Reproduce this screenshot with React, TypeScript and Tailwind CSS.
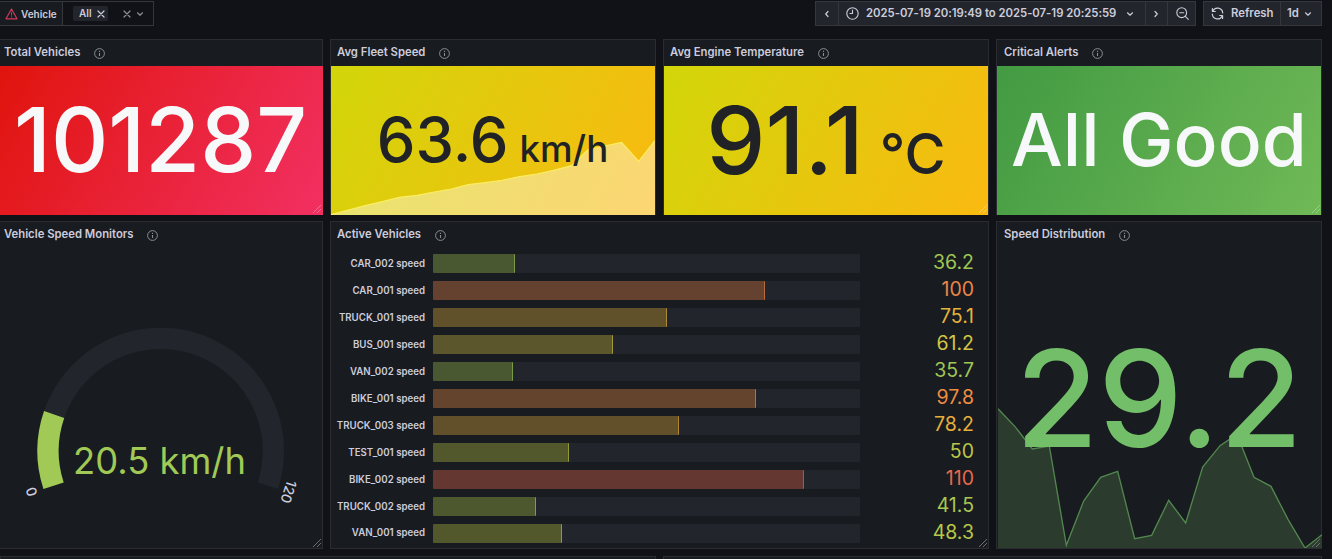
import React from "react";

const ICON = "fill-none stroke-current";

function InfoIcon() {
  return (
    <svg className="mt-[2px] h-[11px] w-[11px] text-[#8b8d94]" viewBox="0 0 11 11">
      <circle cx="5.5" cy="5.5" r="4.9" className={ICON} strokeWidth="1" />
      <path d="M5.5 5v3" className={ICON} strokeWidth="1.1" />
      <path d="M5.5 2.8v1.2" className={ICON} strokeWidth="1.1" />
    </svg>
  );
}

function Chevron({ d, className }: { d: string; className?: string }) {
  return (
    <svg className={"h-[8px] w-[8px] shrink-0 " + (className ?? "")} viewBox="0 0 8 8">
      <path d={d} className={ICON} strokeWidth="1.2" strokeLinecap="round" strokeLinejoin="round" />
    </svg>
  );
}
const DOWN = "M1.5 2.8 4 5.2 6.5 2.8";
const LEFT = "M5 1.5 2.7 4 5 6.5";
const RIGHT = "M3 1.5 5.3 4 3 6.5";
const CROSS = "M1 1 7 7M7 1 1 7";

function ResizeHandle({ className }: { className: string }) {
  return (
    <svg className={"absolute right-0 bottom-0 h-[10px] w-[10px] " + className} viewBox="0 0 10 10">
      <path d="M1 9 9 1M5 9 9 5" className={ICON} strokeWidth="1" />
    </svg>
  );
}

function Panel({
  title,
  pad,
  frame,
  children,
  handle,
}: {
  title: string;
  pad: string;
  frame: string;
  children: React.ReactNode;
  handle?: string;
}) {
  return (
    <section className={"relative flex min-w-0 flex-col border-[#2a2c31] bg-[#181b1f] " + frame}>
      <header className={"flex h-[26px] shrink-0 items-center gap-[14px] pb-[2px] " + pad}>
        <h2 className="text-[11.3px] leading-[24px] font-[600] whitespace-nowrap">{title}</h2>
        <InfoIcon />
      </header>
      <div className="relative flex min-h-0 flex-1 flex-col">{children}</div>
      {handle && <ResizeHandle className={handle} />}
    </section>
  );
}

const SPEED_LINE =
  "M18 464 70 450 121 437 172 425 223 412 276 406 328 396 379 387 430 374 481 368 532 361 584 350 636 342 686 331 740 317 788 270 839 258 890 247 941 304 990 242";
const DIST_LINE =
  "M39 268 90 322 142 389 193 380 244 678 296 545 347 474 398 456 449 658 500 648 551 543 602 611 653 443 705 379 756 345 807 474 858 501 909 600 960 686 1011 646";

const vehicles = [
  { name: "CAR_002", value: 36.2, text: "text-[#9fc653]", bar: "bg-[#495831] border-r-[#7b9a45]" },
  { name: "CAR_001", value: 100, text: "text-[#ec8646]", bar: "bg-[#64422f] border-r-[#b86b3d]" },
  { name: "TRUCK_001", value: 75.1, text: "text-[#e2b33c]", bar: "bg-[#60512b] border-r-[#ad8b35]" },
  { name: "BUS_001", value: 61.2, text: "text-[#d2c545]", bar: "bg-[#5b562c] border-r-[#a39838]" },
  { name: "VAN_002", value: 35.7, text: "text-[#9fc653]", bar: "bg-[#495831] border-r-[#7b9a45]" },
  { name: "BIKE_001", value: 97.8, text: "text-[#ee8c43]", bar: "bg-[#64442d] border-r-[#b9703b]" },
  { name: "TRUCK_003", value: 78.2, text: "text-[#e6ae3b]", bar: "bg-[#61502a] border-r-[#b08633]" },
  { name: "TEST_001", value: 50, text: "text-[#bbc646]", bar: "bg-[#53572c] border-r-[#909a3b]" },
  { name: "BIKE_002", value: 110, text: "text-[#e5694c]", bar: "bg-[#643730] border-r-[#b35443]" },
  { name: "TRUCK_002", value: 41.5, text: "text-[#aac74f]", bar: "bg-[#4d582e] border-r-[#849b40]" },
  { name: "VAN_001", value: 48.3, text: "text-[#b8c747]", bar: "bg-[#52572c] border-r-[#8e9a3b]" },
];
const BAR_MIN = 15.3;
const BAR_RANGE = 109;

function Toolbar() {
  const cell = "flex h-full items-center border-[#35373d]";
  return (
    <div className="flex h-[39px] shrink-0 items-start pt-px text-[11.35px] font-[600]">
      <div className="flex h-[25px] border border-l-0 border-[#35373d]">
        <div className={cell + " w-[63px] border-r bg-[#181b1f] pl-[5px]"}>
          <svg className="h-[12px] w-[13px] shrink-0 text-[#d1395c]" viewBox="0 0 13 12">
            <path d="M6.5 1 12 10.8H1Z" className={ICON} strokeWidth="1.2" strokeLinejoin="round" />
            <path d="M6.5 4.3v3.2M6.5 8.5v1" className={ICON} strokeWidth="1" />
          </svg>
          <span className="mt-px ml-[3px] text-[10px]">Vehicle</span>
        </div>
        <div className={cell + " w-[90px] bg-[#111217] pl-[10px]"}>
          <span className="flex h-[15px] w-[35px] items-center rounded-[2px] bg-[#22252b] pl-[6px] text-[10px]">
            All
            <Chevron d={CROSS} className="ml-[5px] h-[7px] w-[7px]" />
          </span>
          <Chevron d={CROSS} className="mt-px ml-[15px] h-[8px] text-[#8e9097]" />
          <Chevron d={DOWN} className="mt-px ml-[5px] text-[#8e9097]" />
        </div>
      </div>
      <div className="ml-auto flex h-[25px] border border-[#35373d] bg-[#22252b]">
        <div className={cell + " w-[23px] justify-center border-r"}>
          <Chevron d={LEFT} />
        </div>
        <div className={cell + " w-[307px] border-r pl-[7px]"}>
          <svg className="h-[13px] w-[13px] shrink-0" viewBox="0 0 13 13">
            <circle cx="6.5" cy="6.5" r="5.7" className={ICON} strokeWidth="1.1" />
            <path d="M6.5 3v3.5H4" className={ICON} strokeWidth="1.1" strokeLinecap="round" strokeLinejoin="round" />
          </svg>
          <span className="mt-px ml-[7px] w-[250px] shrink-0 tracking-[-0.03px] whitespace-nowrap">
            2025-07-19 20:19:49 to 2025-07-19 20:25:59
          </span>
          <Chevron d={DOWN} className="ml-[10px]" />
        </div>
        <div className={cell + " w-[22px] justify-center border-r pr-px"}>
          <Chevron d={RIGHT} />
        </div>
        <div className={cell + " w-[27px] justify-center pl-px"}>
          <svg className="h-[13px] w-[13px]" viewBox="0 0 13 13">
            <circle cx="5.7" cy="5.7" r="4.9" className={ICON} strokeWidth="1.1" />
            <path d="M9.3 9.3 12.3 12.3M3.7 5.7h4" className={ICON} strokeWidth="1.1" strokeLinecap="round" />
          </svg>
        </div>
      </div>
      <div className="mr-[10px] ml-[7px] flex h-[25px] border border-[#35373d] bg-[#22252b]">
        <div className={cell + " w-[77px] border-r pl-[7px]"}>
          <svg className="h-[13px] w-[13px] shrink-0" viewBox="0 0 13 13">
            <path
              d="M1.4 1.6v2.9h2.9M1.7 4.3A5.2 5.2 0 0 1 11.7 6M11.6 11.4V8.5H8.7M11.3 8.7A5.2 5.2 0 0 1 1.3 7"
              className={ICON}
              strokeWidth="1.2"
              strokeLinecap="round"
              strokeLinejoin="round"
            />
          </svg>
          <span className="mt-px ml-[7px]">Refresh</span>
        </div>
        <div className={cell + " w-[40px] pl-[6px]"}>
          <span className="mt-px">1d</span>
          <Chevron d={DOWN} className="ml-[5px]" />
        </div>
      </div>
    </div>
  );
}

function polar(r: number, deg: number) {
  const a = (deg * Math.PI) / 180;
  return `${(160.7 + r * Math.cos(a)).toFixed(2)} ${(203 + r * Math.sin(a)).toFixed(2)}`;
}
function ring(from: number, to: number) {
  const large = to - from > 180 ? 1 : 0;
  return `M${polar(123.3, from)}A123.3 123.3 0 ${large} 1 ${polar(123.3, to)}L${polar(102, to)}A102 102 0 ${large} 0 ${polar(102, from)}Z`;
}

export default function App() {
  return (
    <main className="flex h-[559px] w-[1332px] flex-col overflow-hidden bg-[#111217] font-['Inter',sans-serif] text-[#ccccdc]">
      <Toolbar />
      <div className="grid h-[176px] shrink-0 grid-cols-[323px_326px_326px_326px] gap-x-[7px]">
        <Panel title="Total Vehicles" pad="pl-[4px]" frame="border border-l-0" handle="text-white/30">
          <div className="-mr-px -mb-px flex flex-1 items-center justify-center bg-[linear-gradient(120deg,#e0140d,#f23062)] pr-[2px] pb-[2px] text-[89px] leading-none font-medium text-[#f7f8fa]">
            <span>101287</span>
          </div>
        </Panel>
        <Panel title="Avg Fleet Speed" pad="pl-[6px]" frame="border">
          <div className="relative -mb-px flex flex-1 items-center justify-center bg-[linear-gradient(120deg,#d2d60a,#fab911)] pr-px pb-px text-[#202226]">
            <svg className="absolute inset-0 h-full w-full" viewBox="18 18 972 447" preserveAspectRatio="none">
              <path d={SPEED_LINE + "V465H18Z"} className="fill-white/41" />
              <path d={SPEED_LINE} className="fill-none stroke-[#fbee63]" strokeWidth="3.5" />
            </svg>
            <div className="relative flex items-baseline leading-none">
              <span className="text-[61.5px] font-medium">63.6</span>
              <span className="ml-[11px] text-[36.7px] font-medium">km/h</span>
            </div>
          </div>
        </Panel>
        <Panel title="Avg Engine Temperature" pad="pl-[6px]" frame="border" handle="text-white/30">
          <div className="-mb-px flex flex-1 items-center justify-center bg-[linear-gradient(120deg,#d2d60a,#fab911)] pb-[2px] text-[#202226]">
            <div className="flex items-baseline leading-none">
              <span className="text-[94px] font-medium">91.1</span>
              <span className="ml-[16px] text-[56px] font-medium">°C</span>
            </div>
          </div>
        </Panel>
        <Panel title="Critical Alerts" pad="pl-[7px]" frame="border" handle="text-white/30">
          <div className="-mb-px flex flex-1 items-center justify-center bg-[linear-gradient(120deg,#429a42,#70b957)] pb-[2px] text-[73px] leading-none font-medium text-[#f7f8fa]">
            <span className="whitespace-nowrap">All Good</span>
          </div>
        </Panel>
      </div>

      <div className="mt-[6px] grid h-[328px] shrink-0 grid-cols-[323px_659px_326px] gap-x-[7px]">
        <Panel title="Vehicle Speed Monitors" pad="pl-[4px]" frame="border border-l-0" handle="text-[#6b6d73]">
          <svg className="h-[300px] w-[322px]" viewBox="0 0 322 300">
            <path d={ring(-198, 18)} className="fill-[#22252b]" />
            <path d={ring(-198, -161.1)} className="fill-[#a0c955]" />
            <text x="159.5" y="226" textAnchor="middle" className="fill-[#a0c955] text-[36.4px]">
              20.5 km/h
            </text>
            <text transform="translate(31 244) rotate(-108)" textAnchor="middle" dominantBaseline="central" className="fill-[#ccccdc] text-[14px] font-medium">
              0
            </text>
            <text transform="translate(289 244) rotate(108)" textAnchor="middle" dominantBaseline="central" className="fill-[#ccccdc] text-[14px] font-medium">
              120
            </text>
          </svg>
        </Panel>
        <Panel title="Active Vehicles" pad="pl-[6px]" frame="border" handle="text-[#6b6d73]">
          <ul className="flex h-[294.8px] flex-col gap-[8px] pt-[6.3px] pr-[14px]">
            {vehicles.map((v) => (
              <li key={v.name} className="flex min-h-0 flex-1 items-center">
                <span className="w-[94px] shrink-0 text-right text-[9.7px] leading-none font-[600] whitespace-nowrap">
                  {v.name} speed
                </span>
                <div className="ml-[8px] h-full w-[427px] shrink-0 rounded-[1px] bg-[#22252b]">
                  <div
                    className={"h-full rounded-[1px] border-r " + v.bar}
                    style={{ width: `${((v.value - BAR_MIN) / BAR_RANGE) * 100}%` }}
                  />
                </div>
                <span className={"-mt-[2px] flex-1 text-right text-[19.5px] leading-none " + v.text}>{v.value}</span>
              </li>
            ))}
          </ul>
        </Panel>
        <Panel title="Speed Distribution" pad="pl-[7px]" frame="border" handle="text-[#6b6d73]">
          <div className="relative flex flex-1 items-center justify-center text-[134px] leading-none font-medium text-[#73bf69]">
            <svg className="absolute bottom-0 left-px h-[140px] w-[324px]" viewBox="39 266 972 420" preserveAspectRatio="none">
              <path d={DIST_LINE + "V686H39Z"} className="fill-[#2b3c2e]" />
              <path d={DIST_LINE} className="fill-none stroke-[#53874f]" strokeWidth="4" />
            </svg>
            <span className="relative">29.2</span>
          </div>
        </Panel>
      </div>

      <div className="mt-[7px] grid h-[20px] shrink-0 grid-cols-[656px_659px] gap-x-[7px]">
        <div className="border border-[#2a2c31] bg-[#181b1f]" />
        <div className="border border-[#2a2c31] bg-[#181b1f]" />
      </div>
    </main>
  );
}
